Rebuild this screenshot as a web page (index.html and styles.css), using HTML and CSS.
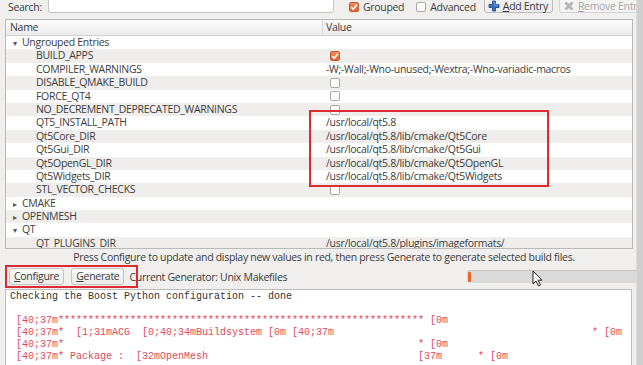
FILE: index.html
```html
<!DOCTYPE html>
<html lang="en">

<head>
    <meta charset="UTF-8">
    <title>CMake</title>
    <link rel="stylesheet" href="styles.css">
</head>

<body>
    <div class="window">
        <div class="main">
            <div class="topbar">
                <span class="search-label">Search:</span>
                <div class="search-box"></div>
                <label class="check">
                    <span class="box checked">
                        <svg viewBox="0 0 10 10" width="10" height="10"><path d="M2.2 5.2 L4.2 7.2 L8 2.6" fill="none" stroke="#fff" stroke-width="1.6" /></svg>
                    </span>
                    Grouped
                </label>
                <label class="check"><span class="box"></span>Advanced</label>
                <button class="tool-btn add-btn">
                    <svg viewBox="0 0 12 12" width="12" height="12"><path d="M4.5 1 H7.5 V4.5 H11 V7.5 H7.5 V11 H4.5 V7.5 H1 V4.5 H4.5 Z" fill="#3b6fc4" stroke="#1d3f7a" stroke-width="0.8" /><path d="M5.2 2 H6.8 V5.2 H10" fill="none" stroke="#8fb4ee" stroke-width="0.7" /></svg>
                    <span><u>A</u>dd Entry</span>
                </button>
                <button class="tool-btn remove-btn">
                    <svg viewBox="0 0 12 12" width="12" height="12"><path d="M2 3.5 L3.5 2 L6 4.5 L8.5 2 L10 3.5 L7.5 6 L10 8.5 L8.5 10 L6 7.5 L3.5 10 L2 8.5 L4.5 6 Z" fill="#b9b9b9" stroke="#9a9a9a" stroke-width="0.6" /></svg>
                    <span><u>R</u>emove Entry</span>
                </button>
            </div>

            <div class="tree">
                <div class="tree-head">
                    <div class="head-cell name-head">Name</div>
                    <div class="head-cell">Value</div>
                </div>
                <div class="rows">
                    <div class="row"><div class="name group"><span class="arrow">&#9662;</span>Ungrouped Entries</div><div class="value"></div></div>
                    <div class="row"><div class="name">BUILD_APPS</div><div class="value"><span class="box checked"><svg viewBox="0 0 10 10" width="10" height="10"><path d="M2.2 5.2 L4.2 7.2 L8 2.6" fill="none" stroke="#fff" stroke-width="1.6" /></svg></span></div></div>
                    <div class="row"><div class="name">COMPILER_WARNINGS</div><div class="value">-W;-Wall;-Wno-unused;-Wextra;-Wno-variadic-macros</div></div>
                    <div class="row"><div class="name">DISABLE_QMAKE_BUILD</div><div class="value"><span class="box"></span></div></div>
                    <div class="row"><div class="name">FORCE_QT4</div><div class="value"><span class="box"></span></div></div>
                    <div class="row"><div class="name">NO_DECREMENT_DEPRECATED_WARNINGS</div><div class="value"><span class="box"></span></div></div>
                    <div class="row"><div class="name">QT5_INSTALL_PATH</div><div class="value">/usr/local/qt5.8</div></div>
                    <div class="row"><div class="name">Qt5Core_DIR</div><div class="value">/usr/local/qt5.8/lib/cmake/Qt5Core</div></div>
                    <div class="row"><div class="name">Qt5Gui_DIR</div><div class="value">/usr/local/qt5.8/lib/cmake/Qt5Gui</div></div>
                    <div class="row"><div class="name">Qt5OpenGL_DIR</div><div class="value">/usr/local/qt5.8/lib/cmake/Qt5OpenGL</div></div>
                    <div class="row"><div class="name">Qt5Widgets_DIR</div><div class="value">/usr/local/qt5.8/lib/cmake/Qt5Widgets</div></div>
                    <div class="row"><div class="name">STL_VECTOR_CHECKS</div><div class="value"><span class="box"></span></div></div>
                    <div class="row"><div class="name group"><span class="arrow">&#9656;</span>CMAKE</div><div class="value"></div></div>
                    <div class="row"><div class="name group"><span class="arrow">&#9656;</span>OPENMESH</div><div class="value"></div></div>
                    <div class="row"><div class="name group"><span class="arrow">&#9662;</span>QT</div><div class="value"></div></div>
                    <div class="row"><div class="name">QT_PLUGINS_DIR</div><div class="value">/usr/local/qt5.8/plugins/imageformats/</div></div>
                </div>
                <div class="mark mark-paths"></div>
            </div>

            <div class="status">Press Configure to update and display new values in red, then press Generate to generate selected build files.</div>

            <div class="actions">
                <button class="push-btn"><u>C</u>onfigure</button>
                <button class="push-btn"><u>G</u>enerate</button>
                <span class="generator">Current Generator: Unix Makefiles</span>
                <div class="progress"><span class="progress-fill"></span></div>
                <div class="mark mark-buttons"></div>
                <svg class="cursor" viewBox="0 0 11 17" width="11" height="17"><path d="M1 1 V14 L4 11 L6.5 16 L8.5 15 L6 10.2 H10 Z" fill="#fff" stroke="#222" stroke-width="1" stroke-linejoin="round" /></svg>
            </div>

            <div class="output">
<pre>Checking the Boost Python configuration -- done

<span class="red"> [40;37m************************************************************* [0m</span>
<span class="red"> [40;37m*  [1;31mACG  [0;40;34mBuildsystem [0m [40;37m                                           * [0m</span>
<span class="red"> [40;37m*                                                           * [0m</span>
<span class="red"> [40;37m* Package :  [32mOpenMesh                                   [37m      * [0m</span></pre>
            </div>
        </div>
        <div class="side"></div>
    </div>
</body>

</html>
```

FILE: styles.css
```css
* {
    box-sizing: border-box;
}

body {
    margin: 0;
    background: #f0efee;
    font-family: "Open Sans", "Noto Sans", sans-serif;
    font-size: 10.5px;
    letter-spacing: -0.3px;
    color: #3c3c3c;
    overflow: hidden;
}

.window {
    display: flex;
    height: 365px;
}

.main {
    width: 636px;
    flex-shrink: 0;
}

.side {
    flex: 1;
    background: #cfcfcf;
    border-left: 1px solid #dcdcdc;
}

/* top bar */

.topbar {
    display: flex;
    align-items: flex-end;
    height: 14px;
    white-space: nowrap;
}

.search-label {
    margin-left: 8px;
    line-height: 14px;
}

.search-box {
    width: 286px;
    height: 26px;
    margin-left: 6px;
    margin-bottom: 1px;
    background: #fff;
    border: 1px solid #c4c4c4;
    border-radius: 3px;
    flex-shrink: 0;
}

.check {
    display: flex;
    align-items: center;
    gap: 4px;
    line-height: 14px;
    margin-left: 15px;
}

.check + .check {
    margin-left: 12px;
}

.box {
    display: inline-flex;
    width: 10px;
    height: 10px;
    border: 1px solid #a6a6a6;
    border-radius: 2px;
    background: #fff;
}

.box.checked {
    border-color: #c65a2c;
    background: linear-gradient(#f58a5a, #e3622f);
}

.box svg {
    margin: -1px;
}

.tool-btn {
    display: flex;
    align-items: center;
    gap: 3px;
    flex-shrink: 0;
    height: 26px;
    padding: 12px 4px 0 3px;
    margin-bottom: 1px;
    border: 1px solid #bdbdbd;
    border-radius: 3px;
    background: linear-gradient(#f8f8f8, #ececec);
    font: inherit;
    color: #3c3c3c;
    letter-spacing: inherit;
    white-space: nowrap;
}

.add-btn {
    margin-left: 8px;
}

.remove-btn {
    margin-left: 6px;
    color: #a9a9a9;
    border-color: #d4d4d4;
    background: #f3f3f3;
}

/* tree */

.tree {
    position: relative;
    height: 230px;
    margin: 5px 3px 0 5px;
    border: 1px solid #b9b9b9;
    background: #fff;
    overflow: hidden;
}

.tree-head {
    display: grid;
    grid-template-columns: 317px 1fr;
    height: 16px;
    background: linear-gradient(#fbfbfb, #ececec);
    border-bottom: 1px solid #d2d2d2;
}

.head-cell {
    line-height: 15px;
    padding-left: 3px;
}

.name-head {
    padding-left: 4px;
    border-right: 1px solid #d6d6d6;
}

.row {
    display: grid;
    grid-template-columns: 317px 1fr;
    height: 13.4px;
    line-height: 13.4px;
    white-space: nowrap;
}

.row:nth-child(even) {
    background: #efeeed;
}

.name {
    padding-left: 30px;
}

.name.group {
    padding-left: 7px;
}

.arrow {
    display: inline-block;
    width: 9px;
    font-size: 8px;
    color: #555;
}

.value {
    display: flex;
    align-items: center;
    padding-left: 3px;
}

.value .box {
    margin-left: 4px;
}

/* red annotation frames */

.mark {
    position: absolute;
    border: 2px solid #dd2b33;
}

.mark-paths {
    left: 303px;
    top: 90px;
    width: 240px;
    height: 77px;
}

.mark-buttons {
    left: 5px;
    top: 0;
    width: 133px;
    height: 23px;
}

/* bottom */

.status {
    height: 16px;
    line-height: 16px;
    text-align: center;
    padding-left: 12px;
}

.actions {
    position: relative;
    display: flex;
    align-items: center;
    height: 23px;
    padding-left: 9px;
    white-space: nowrap;
}

.push-btn {
    height: 17px;
    padding: 0 4px;
    margin-right: 7px;
    border: 1px solid #c3c3c3;
    border-radius: 3px;
    background: linear-gradient(#fafafa, #ebebeb);
    font: inherit;
    letter-spacing: inherit;
    color: #3c3c3c;
    line-height: 15px;
}

.generator {
    margin-left: -2px;
}

.progress {
    display: flex;
    align-items: center;
    height: 13px;
    width: 170px;
    margin-left: auto;
    margin-right: -1px;
    background: #dadada;
    border-top: 1px solid #c9c9c9;
    border-radius: 3px 0 0 3px;
}

.progress-fill {
    width: 3px;
    height: 10px;
    margin-left: 1px;
    background: #e8652f;
    border-radius: 1px;
}

.cursor {
    position: absolute;
    left: 532px;
    top: 5px;
}

.output {
    height: 80px;
    margin: 1px 4px 0 5px;
    padding: 1px 0 0 4px;
    background: #fff;
    border: 1px solid #bcbcbc;
    overflow: hidden;
}

.output pre {
    margin: 0;
    font-family: "Liberation Mono", "Courier New", monospace;
    font-size: 10px;
    line-height: 12px;
    letter-spacing: 0;
    color: #333;
}

.red {
    color: #e0485c;
}
```
